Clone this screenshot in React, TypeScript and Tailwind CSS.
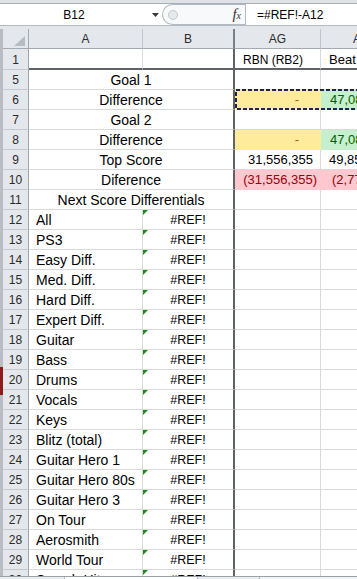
import React from "react";

type Tone = "yellow" | "green" | "pink";
type Val = { text: string; tone?: Tone; pad: string };

const tones: Record<Tone, string> = {
  yellow: "bg-[#ffeb9c] text-[#9c6500] border-[#ffeb9c]",
  green: "bg-[#c6efce] text-[#006100] border-[#c6efce]",
  pink: "bg-[#ffc7ce] text-[#9c0006] border-[#ffc7ce]",
};

const summary: { n: number; label: string; ag?: Val; ah?: Val; marquee?: boolean }[] = [
  { n: 5, label: "Goal 1" },
  {
    n: 6,
    label: "Difference",
    ag: { text: "-", tone: "yellow", pad: "pr-[21px]" },
    ah: { text: "47,085,301", tone: "green", pad: "pl-[9px]" },
    marquee: true,
  },
  { n: 7, label: "Goal 2" },
  {
    n: 8,
    label: "Difference",
    ag: { text: "-", tone: "yellow", pad: "pr-[21px]" },
    ah: { text: "47,085,301", tone: "green", pad: "pl-[9px]" },
  },
  {
    n: 9,
    label: "Top Score",
    ag: { text: "31,556,355", pad: "pr-[7px]" },
    ah: { text: "49,856,210", pad: "pl-[8px]" },
  },
  {
    n: 10,
    label: "Diference",
    ag: { text: "(31,556,355)", tone: "pink", pad: "pr-[3px]" },
    ah: { text: "(2,771,855)", tone: "pink", pad: "pl-[11px]" },
  },
  { n: 11, label: "Next Score Differentials" },
];

const labels = [
  "All",
  "PS3",
  "Easy Diff.",
  "Med. Diff.",
  "Hard Diff.",
  "Expert Diff.",
  "Guitar",
  "Bass",
  "Drums",
  "Vocals",
  "Keys",
  "Blitz (total)",
  "Guitar Hero 1",
  "Guitar Hero 80s",
  "Guitar Hero 3",
  "On Tour",
  "Aerosmith",
  "World Tour",
  "Smash Hits",
];

const RowNum = ({ n, h = "h-[20px]" }: { n: number; h?: string }) => (
  <div
    className={`${h} flex w-[26px] shrink-0 items-center justify-center border-b border-r border-b-[#c6cad0] border-r-[#9da3ab] bg-[#e4e7eb] pt-[1px] text-[12px] text-[#2b2b2b]`}
  >
    {n}
  </div>
);

const Marquee = () => (
  <div className="pointer-events-none absolute left-[232px] top-[-1px] h-[21px] w-[130px]">
    <svg width="130" height="21">
      <rect x="1" y="1" width="200" height="19" fill="none" stroke="#1f2350" strokeWidth="2" strokeDasharray="4 2" />
    </svg>
  </div>
);

const ErrFlag = () => (
  <svg className="absolute left-0 top-0" width="5" height="5">
    <polygon points="0,0 5,0 0,5" fill="#1c8a1c" />
  </svg>
);

export default function App() {
  return (
    <div className="flex h-[579px] w-[357px] flex-col overflow-hidden bg-white font-['Liberation_Sans',Arial,sans-serif] text-black">
      {/* formula bar */}
      <div className="flex h-[29px] shrink-0 flex-col">
        <div className="h-[4px] border-b border-[#a9afb7] bg-[#dfe3e8]" />
        <div className="flex h-[21px] bg-white">
          <div className="flex w-[148px] items-center justify-center pt-[1px] text-[12px]">B12</div>
          <div className="flex w-[14px] items-center justify-center">
            <svg width="7" height="4">
              <polygon points="0,0 7,0 3.5,4" fill="#3a3a3a" />
            </svg>
          </div>
          <div className="flex w-[83px] items-center rounded-l-full border border-r-0 border-[#b3b9c1] bg-[#f8f9fa] pl-[5px]">
            <div className="h-[10px] w-[10px] rounded-full border border-[#c4c9cf] bg-[#e6e9ec]" />
            <span className="ml-auto mr-[4px] font-['Liberation_Serif',serif] text-[15px] italic text-[#333]">
              f<span className="text-[10px]">x</span>
            </span>
          </div>
          <div className="flex flex-1 items-center border-l border-[#b3b9c1] pl-[11px] pt-[1px] text-[12px]">=#REF!-A12</div>
        </div>
        <div className="h-[4px] border-t border-[#b6bbc2] bg-[#e3e6ea]" />
      </div>

      {/* sheet */}
      <div className="flex h-[547px] shrink-0 overflow-hidden">
        <div className="flex w-[3px] shrink-0 flex-col bg-[#b9bdc3]">
          <div className="h-[338px]" />
          <div className="h-[28px] bg-[#8e1b1b]" />
        </div>
        <div className="flex flex-1 flex-col overflow-hidden">
          {/* column headers */}
          <div className="flex h-[20px] shrink-0 bg-[#e4e7eb] text-[12px] text-[#2b2b2b]">
            <div className="relative w-[26px] shrink-0 border-b border-r border-[#a3a9b1]">
              <svg className="absolute bottom-[2px] right-[3px]" width="11" height="10">
                <polygon points="11,0 11,10 0,10" fill="#b7bbc1" />
              </svg>
            </div>
            <div className="flex w-[114px] shrink-0 items-center justify-center border-b border-r border-b-[#a3a9b1] border-r-[#c0c5cc]">A</div>
            <div className="flex w-[92px] shrink-0 items-center justify-center border-b border-r-2 border-b-[#a3a9b1] border-r-[#7b8087]">B</div>
            <div className="flex w-[86px] shrink-0 items-center justify-center border-b border-r border-b-[#a3a9b1] border-r-[#c0c5cc]">AG</div>
            <div className="flex w-[90px] shrink-0 items-center border-b border-r border-b-[#a3a9b1] border-r-[#c0c5cc] pl-[32px]">AH</div>
          </div>

          {/* row 1 */}
          <div className="flex h-[21px] shrink-0">
            <RowNum n={1} h="h-[21px]" />
            <div className="w-[114px] shrink-0 border-b-2 border-r border-b-[#5f6368] border-r-[#d9d9d9]" />
            <div className="w-[92px] shrink-0 border-b-2 border-r-2 border-[#5f6368]" />
            <div className="flex w-[86px] shrink-0 items-center whitespace-nowrap border-b-2 border-r border-b-[#5f6368] border-r-[#d9d9d9] pl-[8px] pt-[2px] text-[12px]">
              RBN (RB2)
            </div>
            <div className="flex w-[90px] shrink-0 items-center whitespace-nowrap border-b-2 border-r border-b-[#5f6368] border-r-[#d9d9d9] pl-[8px] pt-[2px] text-[13px]">
              Beat Hazard
            </div>
          </div>

          {/* summary rows */}
          {summary.map((r) => (
            <div key={r.n} className="relative flex h-[20px] shrink-0">
              <RowNum n={r.n} />
              <div className="flex w-[206px] shrink-0 items-center justify-center whitespace-nowrap border-b border-r-2 border-b-[#d9d9d9] border-r-[#5f6368] pt-[1px] text-[14px]">
                {r.label}
              </div>
              <div
                className={`flex w-[86px] shrink-0 items-center justify-end whitespace-nowrap border-b border-r pt-[1px] text-[13px] ${
                  r.ag?.tone ? tones[r.ag.tone] : "border-[#d9d9d9]"
                } ${r.ag?.pad ?? ""}`}
              >
                {r.ag?.text}
              </div>
              <div
                className={`flex w-[90px] shrink-0 items-center whitespace-nowrap border-b border-r pt-[1px] text-[13px] ${
                  r.ah?.tone ? tones[r.ah.tone] : "border-[#d9d9d9]"
                } ${r.ah?.pad ?? ""}`}
              >
                {r.ah?.text}
              </div>
              {r.marquee && <Marquee />}
            </div>
          ))}

          {/* differentials */}
          {labels.map((label, i) => (
            <div key={label} className="flex h-[20px] shrink-0">
              <RowNum n={12 + i} />
              <div className="flex w-[114px] shrink-0 items-center whitespace-nowrap border-b border-r border-[#d9d9d9] pl-[7px] pt-[1px] text-[14px]">
                {label}
              </div>
              <div className="relative flex w-[92px] shrink-0 items-center justify-center border-b border-r-2 border-b-[#d9d9d9] border-r-[#5f6368] pt-[1px] text-[12.5px]">
                <ErrFlag />
                #REF!
              </div>
              <div className="w-[86px] shrink-0 border-b border-r border-[#d9d9d9]" />
              <div className="w-[90px] shrink-0 border-b border-r border-[#d9d9d9]" />
            </div>
          ))}
        </div>
      </div>

      {/* sheet tab strip edge */}
      <div className="flex h-[3px] shrink-0 border-t border-[#9aa0a8] bg-[#eceef1]">
        <div className="w-[65px] border-r border-[#b0b5bc]" />
        <div className="w-[133px] border-r border-[#b0b5bc] bg-white" />
        <div className="w-[62px] border-r border-[#b0b5bc]" />
        <div className="flex-1 bg-[#f4f5f7]" />
      </div>
    </div>
  );
}
